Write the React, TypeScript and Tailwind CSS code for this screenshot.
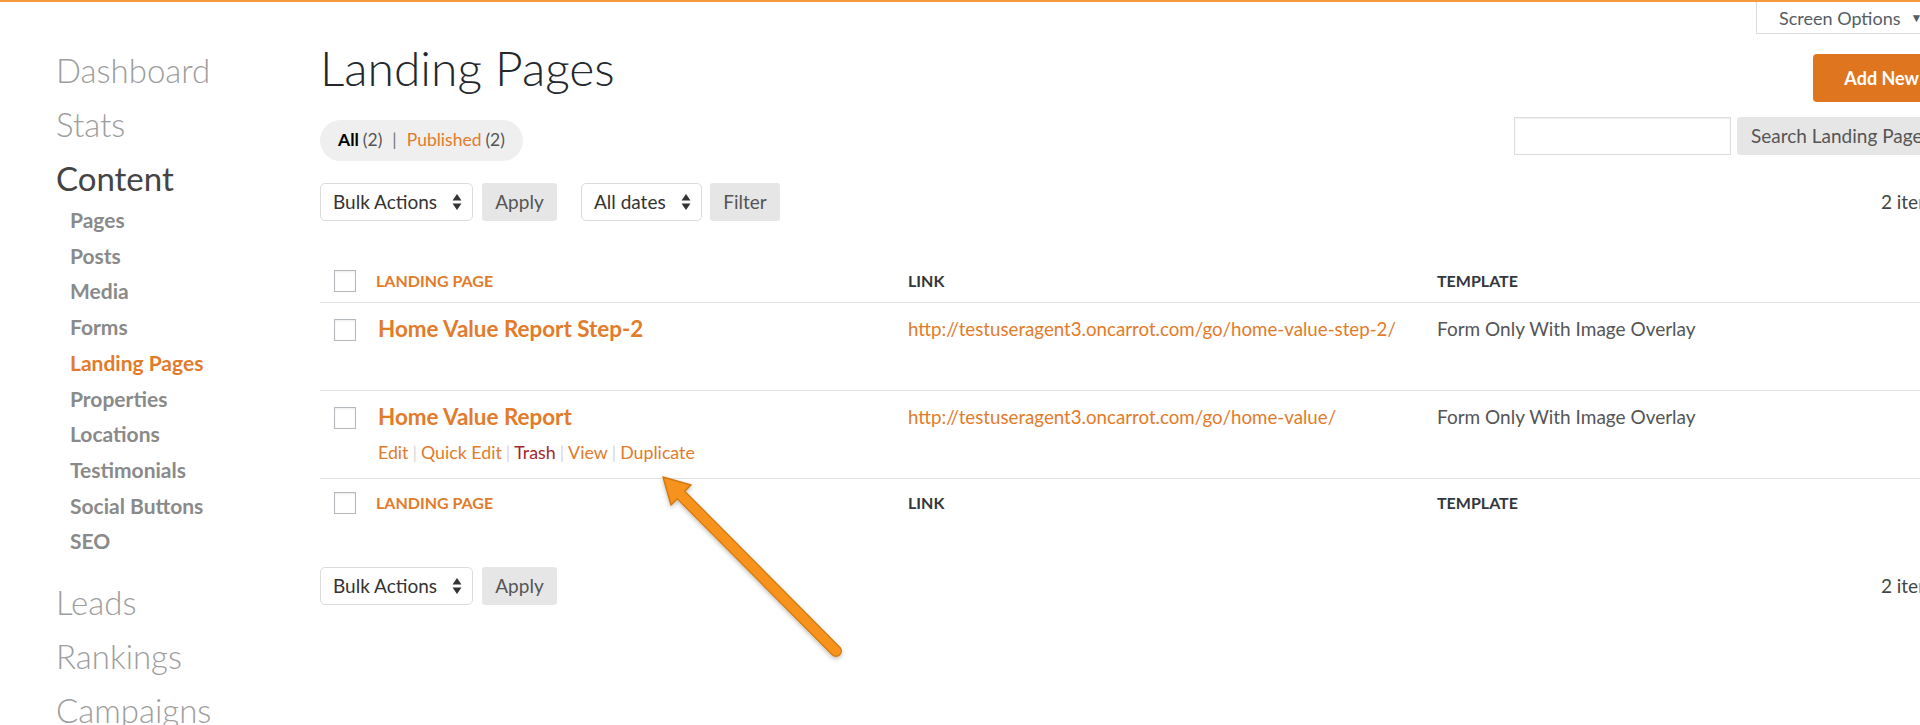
import React from "react";

const orange = "text-[#e27b2a]";

function Checkbox() {
  return <div className="w-[22px] h-[22px] border border-[#b4b9be] bg-white shadow-[inset_0_1px_2px_rgba(0,0,0,0.08)]" />;
}

function UpDown() {
  return (
    <svg width="10" height="18" viewBox="0 0 10 18" className="shrink-0">
      <path d="M5 1 L9.5 7.5 L0.5 7.5 Z" fill="#333" />
      <path d="M5 17 L9.5 10.5 L0.5 10.5 Z" fill="#333" />
    </svg>
  );
}

function Select({ label, w }: { label: string; w: string }) {
  return (
    <div className={`${w} h-[38px] border border-[#dcdcdc] rounded-[5px] bg-white flex items-center justify-between pl-[12px] pr-[10px] text-[19px] text-[#333]`}>
      <span>{label}</span>
      <UpDown />
    </div>
  );
}

function GrayButton({ label, w }: { label: string; w: string }) {
  return (
    <div className={`${w} h-[38px] rounded-[3px] bg-[#e6e6e6] flex items-center justify-center text-[19px] text-[#555]`}>
      {label}
    </div>
  );
}

function Sep() {
  return <span className="text-[#d6d6d6] mx-[4px]">|</span>;
}

export default function App() {
  const font = { fontFamily: "Lato, 'Noto Sans', sans-serif" };
  return (
    <div className="w-[1920px] h-[725px] overflow-hidden relative bg-white border-t-2 border-[#f39a3c] flex" style={font}>
      {/* Sidebar */}
      <div className="w-[320px] shrink-0 pl-[56px] pt-[41px]">
        <div className="text-[33px] font-light leading-[54px] text-[#9d9d9d]">Dashboard</div>
        <div className="text-[33px] font-light leading-[54px] text-[#9d9d9d]">Stats</div>
        <div className="text-[33px] font-normal leading-[54px] text-[#444]">Content</div>
        <div className="pl-[14px] -mt-[3px] text-[21px] font-bold leading-[35.7px] text-[#8a8a8a]">
          <div>Pages</div>
          <div>Posts</div>
          <div>Media</div>
          <div>Forms</div>
          <div className={orange}>Landing Pages</div>
          <div>Properties</div>
          <div>Locations</div>
          <div>Testimonials</div>
          <div>Social Buttons</div>
          <div>SEO</div>
        </div>
        <div className="mt-[16px] text-[33px] font-light leading-[54px] text-[#9d9d9d]">Leads</div>
        <div className="text-[33px] font-light leading-[54px] text-[#9d9d9d]">Rankings</div>
        <div className="text-[33px] font-light leading-[54px] text-[#9d9d9d]">Campaigns</div>
      </div>

      {/* Main */}
      <div className="w-[1630px] shrink-0 flex flex-col">
        {/* Screen options */}
        <div className="flex justify-end h-[32px]">
          <div className="w-[194px] h-[32px] border-x border-b border-[#dcdcdc] pl-[22px] text-[18px] leading-[30px] text-[#555d66] flex items-center gap-[10px]">
            <span>Screen Options</span>
            <span className="text-[12px]">▼</span>
          </div>
        </div>

        {/* Title row */}
        <div className="flex justify-between items-start mt-[5px]">
          <h1 className="text-[48px] font-light leading-[58px] text-[#23282d]">Landing Pages</h1>
          <div className="mt-[15px] h-[48px] px-[31px] rounded-[4px] bg-[#df761f] text-white font-bold text-[18px] flex items-center">
            Add New
          </div>
        </div>

        {/* Filters row */}
        <div className="flex justify-between items-start mt-[15px]">
          <div className="mt-[3px] h-[41px] rounded-full bg-[#efefef] px-[18px] flex items-center text-[17.5px] text-[#555]">
            <span className="font-bold text-black">All</span>
            <span className="ml-[4px]">(2)</span>
            <span className="mx-[10px] text-[#777]">|</span>
            <span className={orange}>Published</span>
            <span className="ml-[4px]">(2)</span>
          </div>
          <div className="flex gap-[6px]">
            <div className="w-[217px] h-[38px] border border-[#dcdcdc] bg-white shadow-[inset_0_1px_2px_rgba(0,0,0,0.07)]" />
            <div className="w-[213px] h-[38px] rounded-[3px] bg-[#e6e6e6] pl-[14px] flex items-center text-[19px] text-[#555]">
              Search Landing Pages
            </div>
          </div>
        </div>

        {/* Toolbar */}
        <div className="flex justify-between items-center mt-[22px]">
          <div className="flex items-center">
            <Select label="Bulk Actions" w="w-[153px]" />
            <div className="ml-[9px]"><GrayButton label="Apply" w="w-[75px]" /></div>
            <div className="ml-[24px]"><Select label="All dates" w="w-[121px]" /></div>
            <div className="ml-[8px]"><GrayButton label="Filter" w="w-[70px]" /></div>
          </div>
          <div className="text-[19px] text-[#444] pr-[8px]">2 items</div>
        </div>

        {/* Table */}
        <div className="mt-[39px]">
          <div className="grid grid-cols-[56px_532px_529px_1fr] h-[43px] items-center border-b border-[#e1e1e1] text-[16px] font-bold uppercase">
            <div className="pl-[14px]"><Checkbox /></div>
            <div className={orange}>Landing Page</div>
            <div className="text-[#32373c]">Link</div>
            <div className="text-[#32373c]">Template</div>
          </div>

          <div className="grid grid-cols-[56px_532px_529px_1fr] h-[88px] border-b border-[#e1e1e1] items-start">
            <div className="pl-[14px] pt-[16px]"><Checkbox /></div>
            <div className={`pt-[12px] pl-[2px] text-[22.4px] font-bold leading-[28px] ${orange}`}>Home Value Report Step-2</div>
            <div className={`pt-[12px] text-[18.7px] leading-[28px] ${orange}`}>http://testuseragent3.oncarrot.com/go/home-value-step-2/</div>
            <div className="pt-[12px] text-[19px] leading-[28px] text-[#555]">Form Only With Image Overlay</div>
          </div>

          <div className="grid grid-cols-[56px_532px_529px_1fr] h-[88px] border-b border-[#e1e1e1] items-start">
            <div className="pl-[14px] pt-[16px]"><Checkbox /></div>
            <div className="pt-[12px] pl-[2px]">
              <div className={`text-[22.4px] font-bold leading-[28px] ${orange}`}>Home Value Report</div>
              <div className={`mt-[9px] text-[17.8px] leading-[24px] ${orange}`}>
                <span>Edit</span><Sep /><span>Quick Edit</span><Sep />
                <span className="text-[#a3262b]">Trash</span><Sep /><span>View</span><Sep /><span>Duplicate</span>
              </div>
            </div>
            <div className={`pt-[12px] text-[18.7px] leading-[28px] ${orange}`}>http://testuseragent3.oncarrot.com/go/home-value/</div>
            <div className="pt-[12px] text-[19px] leading-[28px] text-[#555]">Form Only With Image Overlay</div>
          </div>

          <div className="grid grid-cols-[56px_532px_529px_1fr] h-[48px] items-center text-[16px] font-bold uppercase">
            <div className="pl-[14px]"><Checkbox /></div>
            <div className={orange}>Landing Page</div>
            <div className="text-[#32373c]">Link</div>
            <div className="text-[#32373c]">Template</div>
          </div>
        </div>

        {/* Bottom toolbar */}
        <div className="flex justify-between items-center mt-[40px]">
          <div className="flex items-center">
            <Select label="Bulk Actions" w="w-[153px]" />
            <div className="ml-[9px]"><GrayButton label="Apply" w="w-[75px]" /></div>
          </div>
          <div className="text-[19px] text-[#444] pr-[8px]">2 items</div>
        </div>
      </div>

      {/* Annotation arrow */}
      <svg className="absolute left-0 top-0 pointer-events-none" width="1920" height="725" viewBox="0 -2 1920 725">
        <defs>
          <filter id="sh" x="-20%" y="-20%" width="140%" height="140%">
            <feDropShadow dx="0" dy="2" stdDeviation="2" floodColor="#000" floodOpacity="0.25" />
          </filter>
        </defs>
        <g filter="url(#sh)">
          <line x1="836" y1="647" x2="676" y2="486" stroke="#d27a10" strokeWidth="12" strokeLinecap="round" />
          <path d="M663 473 L691 481 L681 491 L671 501 Z" fill="#f7931e" stroke="#d27a10" strokeWidth="1.5" strokeLinejoin="round" />
          <line x1="836" y1="647" x2="676" y2="486" stroke="#f7931e" strokeWidth="9.5" strokeLinecap="round" />
        </g>
      </svg>
    </div>
  );
}
